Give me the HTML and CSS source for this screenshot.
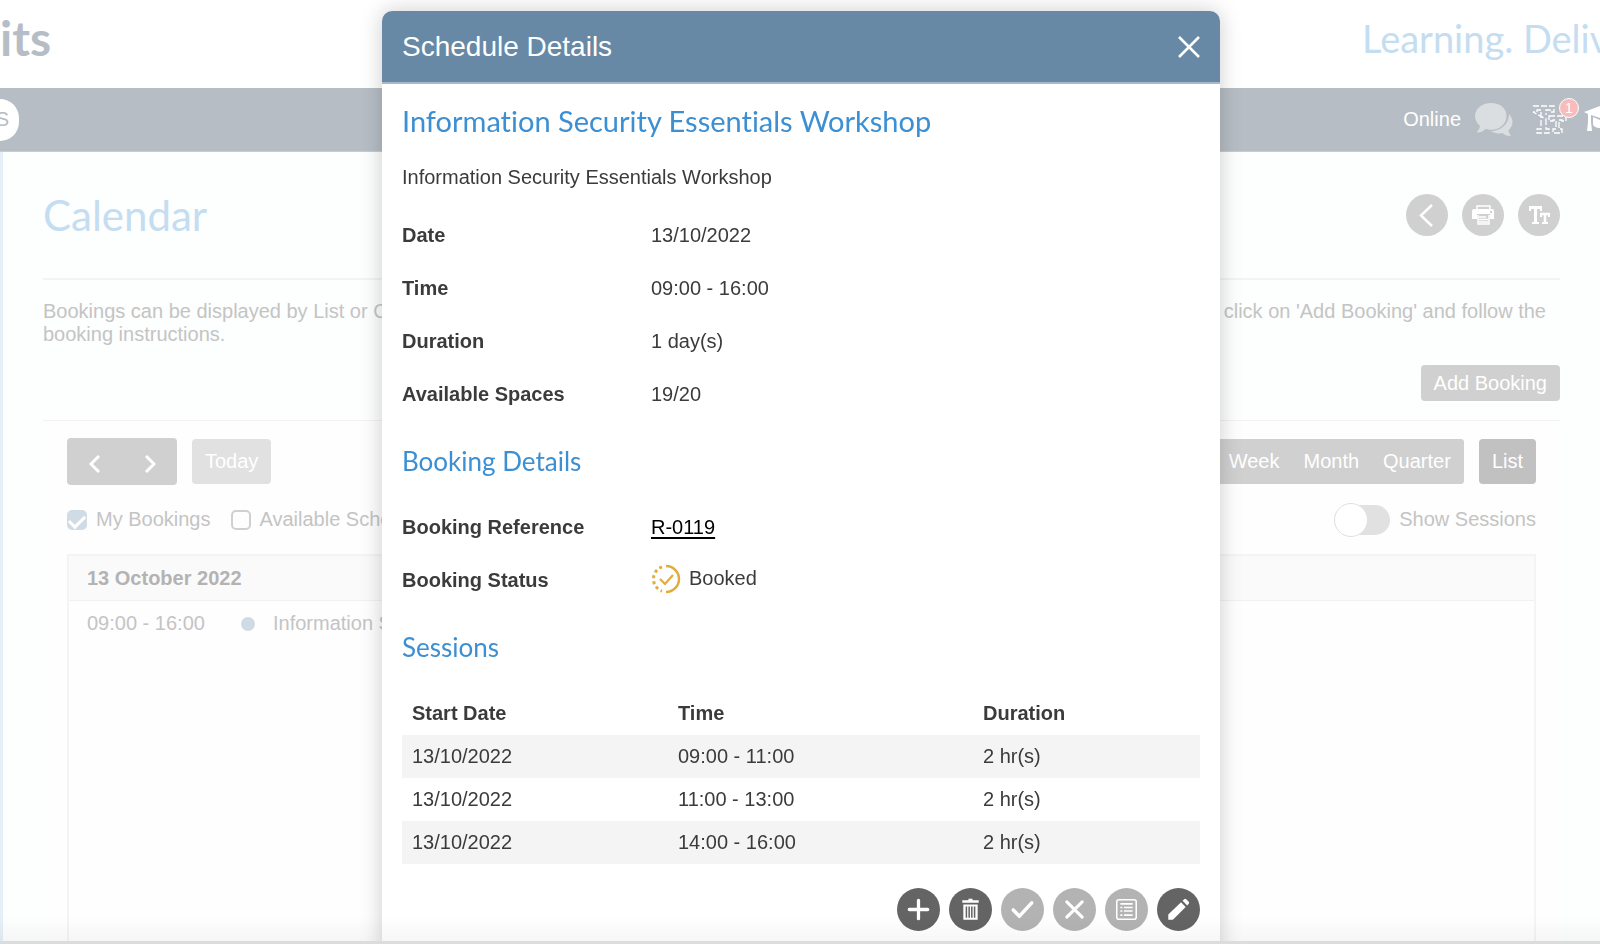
FILE: index.html
```html
<!DOCTYPE html>
<html lang="en">
<head>
  <meta charset="UTF-8" />
  <meta name="viewport" content="width=device-width, initial-scale=1.0"/>
  <title>Calendar - Schedule Details</title>
  <link rel="stylesheet" href="styles.css">
</head>
<body>
  <div class="page">
    <header class="top">
      <span class="brand">its</span>
      <span class="slogan">Learning. Deliv</span>
    </header>

    <nav class="navbar">
      <button class="pill" type="button">S</button>
      <div class="nav-right">
        <span class="online">Online</span>
        <svg class="chat" viewBox="0 0 38 34" width="38" height="34">
          <path fill="#dadee1" d="M16 0C7 0 0 6 0 13c0 4 2 7 5 10-.5 3-2 5-3.500 6.500 4 .3 7-1.500 9-3.500 2 .6 3.500.8 5.500.8 9 0 15.500-6 15.500-13.800S25 0 16 0z"/>
          <path fill="#dadee1" d="M34 11c2 2 3.500 5 3.500 8 0 3.500-1.500 6-4 8 .3 2.500 1 4 2.500 6-4 .3-6.500-1.200-8.500-3-4.500 1-8.500.2-11.500-2C26 28 34 21 34 11z"/>
        </svg>
        <div class="text-tool">
          <svg viewBox="0 0 36 30" width="36" height="30" fill="none" stroke="#fff" stroke-width="1.300" stroke-dasharray="6 2">
            <path d="M1 1h21v6h-4V5h-4v5M14 14v10h3v4H5v-4h4V5H5v2H1z"/>
            <path d="M17 11h17v5h-4v-1h-3v9h3v4h-9v-4h3v-9h-3v1h-4z"/>
          </svg>
          <span class="badge">1</span>
        </div>
        <svg class="cap" viewBox="0 0 16 30" width="16" height="30" fill="#fff">
          <path d="M0 7L16 1v12L7 10v7l1 9H3l1-9V9z"/>
          <path d="M9 12l7 3v8c-4 0-7-2-7-4z"/>
        </svg>
      </div>
    </nav>

    <main class="content">
      <div class="title-row">
        <h1>Calendar</h1>
        <div class="tools">
          <button class="round" type="button" aria-label="Back">
            <svg viewBox="0 0 42 42" width="42" height="42"><path fill="none" stroke="#fff" stroke-width="2.500" d="M26 11L15 21.500 26 32"/></svg>
          </button>
          <button class="round" type="button" aria-label="Print">
            <svg viewBox="0 0 42 42" width="42" height="42">
              <path fill="none" stroke="#fff" stroke-width="1.500" d="M15 15v-3h13v3"/>
              <path fill="#fff" d="M12 15h18a2 2 0 0 1 2 2v8h-4v-5H15v5h-5v-8a2 2 0 0 1 2-2z"/>
              <circle cx="29" cy="18" r="1.200" fill="#d0d0d0"/>
              <path fill="none" stroke="#fff" stroke-width="1.500" d="M16 21v9h11v-9M17 23h7M17 25.500h9M17 28h9"/>
            </svg>
          </button>
          <button class="round" type="button" aria-label="Text size">
            <svg viewBox="0 0 42 42" width="42" height="42" fill="none" stroke="#fff">
              <path stroke-width="3" d="M11 13.500h13M17.500 13v16"/>
              <path stroke-width="2" d="M12 12v5M23 12v5M14 29h7"/>
              <path stroke-width="2.500" d="M22 20h10M27 20v9"/>
              <path stroke-width="2" d="M23 19v4M31 19v4M24 29h6"/>
            </svg>
          </button>
        </div>
      </div>

      <p class="intro">
        <span class="intro-line"><span>Bookings can be displayed by List or Calendar.</span><span>click on 'Add Booking' and follow the</span></span>
        <span class="intro-line">booking instructions.</span>
      </p>

      <div class="add-row">
        <button class="btn" type="button">Add Booking</button>
      </div>

      <section class="panel">
        <div class="toolbar">
          <div class="toolbar-group">
            <div class="arrows">
              <button type="button" aria-label="Previous"><svg viewBox="0 0 12 18" width="12" height="18"><path d="M10 1L2 9l8 8"/></svg></button>
              <button type="button" aria-label="Next"><svg viewBox="0 0 12 18" width="12" height="18"><path d="M2 1l8 8-8 8"/></svg></button>
            </div>
            <button class="btn tall today" type="button">Today</button>
          </div>
          <div class="toolbar-group">
            <div class="views">
              <button class="btn tall" type="button">Day</button>
              <button class="btn tall" type="button">Week</button>
              <button class="btn tall" type="button">Month</button>
              <button class="btn tall" type="button">Quarter</button>
            </div>
            <button class="btn tall active" type="button">List</button>
          </div>
        </div>

        <div class="filters">
          <div class="checks">
            <label><input type="checkbox" class="check" checked> My Bookings</label>
            <label><input type="checkbox" class="check"> Available Schedules</label>
          </div>
          <label class="toggle-label"><input type="checkbox" class="toggle"> Show Sessions</label>
        </div>

        <div class="list">
          <div class="list-day">13 October 2022</div>
          <div class="list-item">
            <span class="list-time">09:00 - 16:00</span>
            <span class="dot"></span>
            <span>Information Security Essentials Workshop</span>
          </div>
        </div>
      </section>
    </main>
  </div>

  <div class="overlay">
    <div class="modal" role="dialog" aria-labelledby="modal-title">
      <div class="modal-header">
        <h2 id="modal-title">Schedule Details</h2>
        <button class="close" type="button" aria-label="Close">
          <svg viewBox="0 0 22 22" width="22" height="22"><path fill="none" stroke="#fff" stroke-width="2.500" d="M1 1l20 20M21 1L1 21"/></svg>
        </button>
      </div>

      <div class="modal-body">
        <h3 class="course">Information Security Essentials Workshop</h3>
        <p class="summary">Information Security Essentials Workshop</p>

        <dl class="details">
          <dt>Date</dt><dd>13/10/2022</dd>
          <dt>Time</dt><dd>09:00 - 16:00</dd>
          <dt>Duration</dt><dd>1 day(s)</dd>
          <dt>Available Spaces</dt><dd>19/20</dd>
        </dl>

        <h3>Booking Details</h3>
        <dl class="details">
          <dt>Booking Reference</dt><dd><a href="#">R-0119</a></dd>
          <dt>Booking Status</dt>
          <dd class="status">
            <svg viewBox="0 0 30 30" width="30" height="30" fill="none" stroke="#e0ad3c">
              <path stroke-width="2.500" d="M15 2a13 13 0 0 1 0 26"/>
              <path stroke-width="3" stroke-dasharray="3 3" d="M11 2.800A13 13 0 0 0 11 27.200"/>
              <path stroke-width="2.200" d="M9 15l5 5 8-9"/>
            </svg>
            Booked
          </dd>
        </dl>

        <h3>Sessions</h3>
        <table class="sessions">
          <thead>
            <tr><th>Start Date</th><th>Time</th><th>Duration</th></tr>
          </thead>
          <tbody>
            <tr><td>13/10/2022</td><td>09:00 - 11:00</td><td>2 hr(s)</td></tr>
            <tr><td>13/10/2022</td><td>11:00 - 13:00</td><td>2 hr(s)</td></tr>
            <tr><td>13/10/2022</td><td>14:00 - 16:00</td><td>2 hr(s)</td></tr>
          </tbody>
        </table>

        <div class="actions">
          <button class="action" type="button" aria-label="Add">
            <svg viewBox="0 0 42 42"><path fill="none" stroke="#fff" stroke-width="3.200" stroke-linecap="round" d="M21 12v18M12 21h18"/></svg>
          </button>
          <button class="action" type="button" aria-label="Delete">
            <svg viewBox="0 0 42 42">
              <path fill="#fff" d="M13 12h6v-1.500h4V12h6v2.500H13zM14 16h14v15H14z"/>
              <path stroke="#646464" stroke-width="1.500" d="M17 18v11M19.700 18v11M22.300 18v11M25 18v11"/>
            </svg>
          </button>
          <button class="action" type="button" aria-label="Approve" disabled>
            <svg viewBox="0 0 42 42"><path fill="none" stroke="#fff" stroke-width="3.500" stroke-linecap="round" stroke-linejoin="round" d="M12 21.500l6 6L30 14.500"/></svg>
          </button>
          <button class="action" type="button" aria-label="Reject" disabled>
            <svg viewBox="0 0 42 42"><path fill="none" stroke="#fff" stroke-width="3" stroke-linecap="round" d="M13.500 13.500l15 15M28.500 13.500l-15 15"/></svg>
          </button>
          <button class="action" type="button" aria-label="Register" disabled>
            <svg viewBox="0 0 42 42" fill="none" stroke="#fff" stroke-width="1.500">
              <rect x="11.500" y="11.500" width="19" height="19" rx="2"/>
              <path d="M15 15.500h12M18.500 19h8.500M18.500 22.500h8.500M18.500 26.500h8.500M15 19h2M15 22.500h2M15 26.500h2"/>
            </svg>
          </button>
          <button class="action" type="button" aria-label="Edit">
            <svg viewBox="0 0 42 42"><path fill="#fff" d="M11 31v-5L23.500 14l4.500 4.500L15.500 31zM25 12.500l1.500-1.500q1-.8 2 0l2.500 2.500q.8 1 0 2L29.500 17z"/></svg>
          </button>
        </div>
      </div>
    </div>
  </div>

  <div class="window-edge"></div>
</body>
</html>
```

FILE: styles.css
```css
* {
  margin: 0;
  padding: 0;
  box-sizing: border-box;
}

body {
  font-family: "Liberation Sans", Arial, sans-serif;
  font-size: 20px;
  line-height: 23px;
  color: #3b3b3b;
  background: #fff;
  overflow: hidden;
}

button {
  font: inherit;
  border: none;
  color: #fff;
  cursor: pointer;
}

svg {
  display: block;
}

h1,
h3,
.brand,
.slogan {
  font-family: Lato, sans-serif;
  font-weight: normal;
  font-variant-ligatures: none;
}

/* page behind the dialog */
.page {
  height: 100vh;
  display: flex;
  flex-direction: column;
  color: #c4c4c4;
  overflow: hidden;
}

.top {
  flex: none;
  height: 88px;
  display: flex;
  justify-content: space-between;
  align-items: center;
  padding-bottom: 12px;
}

.brand {
  color: #b6bdc6;
  font-size: 48px;
  line-height: 56px;
  font-weight: bold;
}

.slogan {
  width: 238px;
  color: #c5ddf1;
  font-size: 38px;
  line-height: 40px;
  white-space: nowrap;
}

.navbar {
  flex: none;
  height: 64px;
  display: flex;
  justify-content: space-between;
  align-items: center;
  background: #b6bdc4;
  border-bottom: 1px solid #c6ccd1;
}

.pill {
  width: 19px;
  height: 42px;
  display: flex;
  justify-content: flex-end;
  align-items: center;
  padding-right: 10px;
  background: #fff;
  color: #b6bdc4;
  border-radius: 0 21px 21px 0;
}

.nav-right {
  display: flex;
  align-items: center;
}

.online {
  color: #fff;
}

.chat {
  margin: 0 19px 0 14px;
}

.text-tool {
  position: relative;
  margin-right: 16px;
}

.badge {
  position: absolute;
  top: -7px;
  right: -11px;
  width: 20px;
  height: 20px;
  border: 1px solid #fff;
  border-radius: 50%;
  background: #f9bcbc;
  color: #fff;
  font-size: 14px;
  line-height: 18px;
  text-align: center;
}

.content {
  flex: 1;
  display: flex;
  flex-direction: column;
  padding: 0 40px;
  border-left: 3px solid #e6eff7;
  background: #fdfefe;
}

.title-row {
  display: flex;
  justify-content: space-between;
  align-items: center;
  height: 128px;
  border-bottom: 2px solid #f2f3f3;
}

h1 {
  color: #c5ddf1;
  font-size: 42px;
  line-height: 48px;
}

.tools {
  display: flex;
  gap: 14px;
}

.round {
  width: 42px;
  height: 42px;
  border-radius: 50%;
  background: #d0d0d0;
}

.intro {
  padding: 20px 14px 0 0;
}

.intro-line {
  display: flex;
  justify-content: space-between;
}

.add-row {
  display: flex;
  justify-content: flex-end;
  padding: 19px 0;
}

.btn {
  height: 36px;
  padding: 0 13px;
  border-radius: 4px;
  background: #d0d0d0;
}

.btn.tall {
  height: 45px;
}

.btn.today {
  background: #e1e1e1;
}

.btn.active {
  background: #c1c1c1;
}

.panel {
  flex: 1;
  display: flex;
  flex-direction: column;
  padding: 17px 24px 0;
  border-top: 1px solid #f1f1f1;
  background: #fefefe;
}

.toolbar,
.toolbar-group {
  display: flex;
  justify-content: space-between;
  align-items: center;
}

.toolbar-group {
  gap: 15px;
}

.arrows,
.views {
  display: flex;
  border-radius: 4px;
  background: #d0d0d0;
}

.views .btn {
  padding: 0 12px;
}

.views .btn:last-child {
  padding-right: 13px;
}

.arrows button {
  width: 55px;
  height: 47px;
  display: flex;
  justify-content: center;
  align-items: center;
  padding-top: 4px;
  background: none;
}

.arrows path {
  fill: none;
  stroke: #fff;
  stroke-width: 3;
}

.filters {
  display: flex;
  justify-content: space-between;
  align-items: center;
  height: 69px;
}

.filters label,
.checks {
  display: flex;
  align-items: center;
}

.checks {
  gap: 20px;
}

.check {
  appearance: none;
  width: 20px;
  height: 20px;
  margin-right: 9px;
  border: 2px solid #d0d0d0;
  border-radius: 5px;
}

.check:checked {
  border-color: #d0dce5;
  background: #d0dce5;
}

.check:checked::after {
  content: "";
  display: block;
  width: 7px;
  height: 13px;
  margin: 0 auto;
  border: solid #fff;
  border-width: 0 3px 3px 0;
  transform: rotate(45deg);
}

.toggle {
  appearance: none;
  width: 56px;
  height: 30px;
  margin-right: 9px;
  display: flex;
  align-items: center;
  border-radius: 15px;
  background: #e1e1e1;
}

.toggle::before {
  content: "";
  flex: none;
  width: 32px;
  height: 32px;
  border: 1px solid #e1e1e1;
  border-radius: 50%;
  background: #fff;
}

.list {
  flex: 1;
  border: 2px solid #f4f4f4;
  border-bottom: none;
}

.list-day {
  padding: 11px 18px 10px;
  border-bottom: 1px solid #f1f1f1;
  background: #fafafa;
  color: #b3b3b3;
  font-weight: bold;
}

.list-item {
  display: flex;
  align-items: center;
  padding: 11px 18px;
}

.list-time {
  width: 154px;
}

.dot {
  width: 14px;
  height: 14px;
  margin-right: 18px;
  border-radius: 50%;
  background: #cfdbe4;
}

/* dialog */
.overlay {
  position: fixed;
  inset: 0;
  display: flex;
  justify-content: center;
  padding: 11px 0 0 2px;
}

.modal {
  width: 100%;
  max-width: 838px;
  height: 100vh;
  border-radius: 10px 10px 0 0;
  background: #fff;
  box-shadow: 0 0 22px rgba(0, 0, 0, 0.2);
}

.modal-header {
  height: 73px;
  display: flex;
  justify-content: space-between;
  align-items: center;
  padding: 0 20px;
  border-bottom: 2px solid #a8b9c7;
  border-radius: 10px 10px 0 0;
  background: #6789a5;
  color: #fff;
}

.modal-header h2 {
  font-size: 28px;
  line-height: 32px;
  font-weight: normal;
}

.close {
  background: none;
}

.modal-body {
  padding: 19px 20px 0;
}

h3 {
  color: #3c8fd2;
  font-size: 26px;
  line-height: 32px;
  padding: 24px 0;
}

h3.course {
  font-size: 29px;
  line-height: 36px;
  padding: 0 0 27px;
}

.summary {
  padding-bottom: 20px;
}

.details {
  display: grid;
  grid-template-columns: 249px 1fr;
}

.details dt,
.details dd {
  height: 53px;
  padding: 15px 0;
}

.details dt {
  font-weight: bold;
}

.details a {
  color: #000;
  text-underline-offset: 3px;
}

.details .status {
  display: flex;
  align-items: center;
  gap: 8px;
  padding: 0 0 4px;
}

.sessions {
  width: 100%;
  margin-top: 5px;
  table-layout: fixed;
  border-collapse: collapse;
}

.sessions th,
.sessions td {
  padding: 10px;
  text-align: left;
}

.sessions th:nth-child(1) {
  width: 266px;
}

.sessions th:nth-child(2) {
  width: 305px;
}

.sessions tbody tr:nth-child(odd) {
  background: #f4f4f4;
}

.actions {
  display: flex;
  justify-content: flex-end;
  gap: 9px;
  padding-top: 24px;
}

.action {
  width: 43px;
  height: 43px;
  border-radius: 50%;
  background: #646464;
}

.action:disabled {
  background: #b3b3b3;
}

/* bottom edge of the window */
.window-edge {
  position: fixed;
  left: 0;
  right: 0;
  bottom: 0;
  height: 28px;
  border-bottom: 3px solid #dcdcdf;
  background: linear-gradient(rgba(0, 0, 0, 0), rgba(0, 0, 0, 0.03));
  pointer-events: none;
}
```
